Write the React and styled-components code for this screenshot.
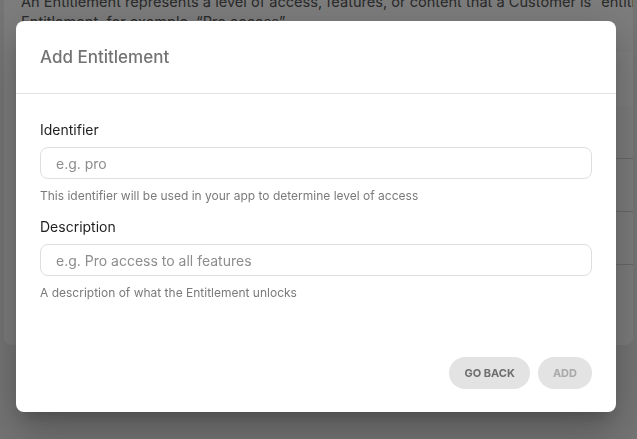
import React from 'react';
import styled, { createGlobalStyle } from 'styled-components';

const GlobalStyle = createGlobalStyle`
  html, body {
    margin: 0;
    padding: 0;
    height: 100%;
    overflow: hidden;
    background: #ebebeb;
    font-family: Inter, "Noto Sans", "Liberation Sans", sans-serif;
  }
`;

const Page = styled.div`
  padding: 0 4px;
  height: 439px;
`;

const Card = styled.div`
  margin-top: -8px;
  background: #fafafa;
  border-radius: 0 0 8px 8px;
  height: 353px;
  padding: 0 0 0 17px;
  overflow: hidden;
`;

const Intro = styled.p`
  margin: 0;
  font-size: 14.6px;
  line-height: 20px;
  color: #555;
  white-space: nowrap;
`;

const TableHead = styled.div`
  margin-top: 20px;
  height: 54px;
  background: #fff;
`;

const TableRow = styled.div`
  height: 52px;
  border-bottom: 1px solid #d4d4d4;
`;

const Overlay = styled.div`
  position: fixed;
  inset: 0;
  background: rgba(0, 0, 0, 0.5);
  padding: 21px 0 0 16px;
`;

const Modal = styled.div`
  width: 600px;
  height: 391px;
  background: #fff;
  border-radius: 8px;
  display: flex;
  flex-direction: column;
  box-shadow: 0 11px 15px -7px rgba(0, 0, 0, 0.2),
    0 24px 38px 3px rgba(0, 0, 0, 0.14), 0 9px 46px 8px rgba(0, 0, 0, 0.12);
`;

const Header = styled.div`
  height: 73px;
  box-sizing: border-box;
  padding: 0 24px;
  display: flex;
  align-items: center;
  border-bottom: 1px solid #e2e2e2;
`;

const Title = styled.h2`
  margin: 0;
  font-size: 17px;
  font-weight: 500;
  color: #737373;
`;

const Body = styled.div`
  padding: 26px 24px 0;
  display: flex;
  flex-direction: column;
`;

const Field = styled.div`
  display: flex;
  flex-direction: column;
  & + & {
    margin-top: 13px;
  }
`;

const Label = styled.label`
  font-size: 14px;
  line-height: 20px;
  color: #1f1f1f;
  margin-bottom: 7px;
`;

const Input = styled.input`
  height: 32px;
  box-sizing: border-box;
  border: 1px solid #dedede;
  border-radius: 8px;
  padding: 0 15px;
  font-family: inherit;
  font-size: 14px;
  color: #222;
  outline: none;
  &::placeholder {
    color: #8d8d8d;
  }
`;

const Help = styled.div`
  margin-top: 9px;
  font-size: 12px;
  line-height: 16px;
  color: #7a7a7a;
`;

const Footer = styled.div`
  margin-top: auto;
  padding: 0 24px 23px;
  display: flex;
  justify-content: flex-end;
  gap: 8px;
`;

const Button = styled.button`
  height: 32px;
  padding: 0 15px;
  border: none;
  border-radius: 16px;
  background: #e3e3e3;
  font-family: inherit;
  font-size: 11px;
  font-weight: 700;
  color: ${(p) => (p.disabled ? '#a9a9a9' : '#6e6e6e')};
  cursor: ${(p) => (p.disabled ? 'default' : 'pointer')};
`;

export default function App() {
  return (
    <>
      <GlobalStyle />
      <Page>
        <Card>
          <Intro>
            An Entitlement represents a level of access, features, or content that a Customer is “entitled” to access.
            <br />
            Entitlement, for example, “Pro access”
          </Intro>
          <TableHead />
          <TableRow />
          <TableRow />
          <TableRow />
        </Card>
      </Page>
      <Overlay>
        <Modal>
          <Header>
            <Title>Add Entitlement</Title>
          </Header>
          <Body>
            <Field>
              <Label>Identifier</Label>
              <Input placeholder="e.g. pro" />
              <Help>This identifier will be used in your app to determine level of access</Help>
            </Field>
            <Field>
              <Label>Description</Label>
              <Input placeholder="e.g. Pro access to all features" />
              <Help>A description of what the Entitlement unlocks</Help>
            </Field>
          </Body>
          <Footer>
            <Button>GO BACK</Button>
            <Button disabled>ADD</Button>
          </Footer>
        </Modal>
      </Overlay>
    </>
  );
}
